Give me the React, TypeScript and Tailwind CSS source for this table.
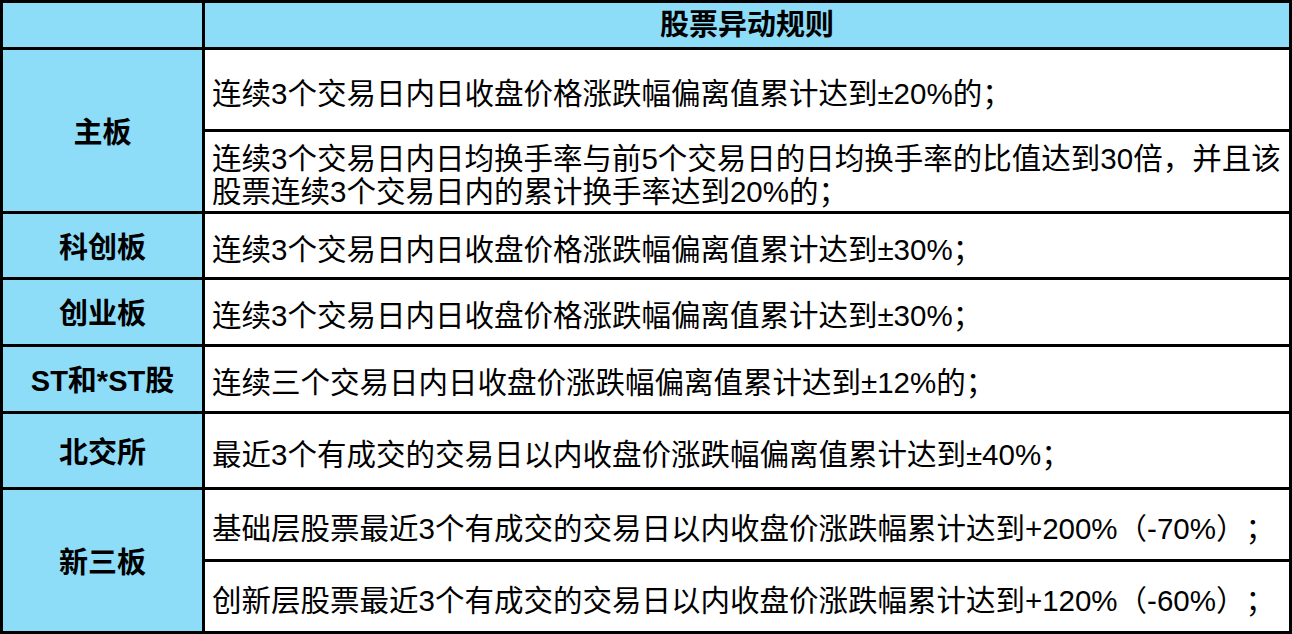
const font = { fontFamily: '"Liberation Sans", "Noto Sans CJK SC", sans-serif' };

function Label({ children, className = "" }: { children: React.ReactNode; className?: string }) {
  return (
    <div className={`flex items-center justify-center bg-[#8ddcf8] pt-[6px] text-[29px] font-bold text-black ${className}`}>
      {children}
    </div>
  );
}

function Rule({ children }: { children: React.ReactNode }) {
  return (
    <div className="flex items-center bg-white pl-[7px] pt-[7px] text-[29.5px] leading-[33px] text-black [text-spacing-trim:space-all]">
      <div>{children}</div>
    </div>
  );
}

export default function App() {
  return (
    <div
      style={font}
      className="grid h-[634px] w-[1292px] grid-cols-[199px_1fr] grid-rows-[44px_79px_79px_63px_64px_64px_73px_69px_69px] gap-[3px] bg-black p-[3px]"
    >
      <div className="bg-[#8ddcf8]" />
      <div className="flex items-center justify-center bg-[#8ddcf8] pt-[2px] text-[29px] font-bold text-black">
        股票异动规则
      </div>

      <Label className="row-span-2">主板</Label>
      <Rule>连续3个交易日内日收盘价格涨跌幅偏离值累计达到±20%的；</Rule>
      <Rule>
        连续3个交易日内日均换手率与前5个交易日的日均换手率的比值达到30倍，并且该
        <br />
        股票连续3个交易日内的累计换手率达到20%的；
      </Rule>

      <Label>科创板</Label>
      <Rule>连续3个交易日内日收盘价格涨跌幅偏离值累计达到±30%；</Rule>

      <Label>创业板</Label>
      <Rule>连续3个交易日内日收盘价格涨跌幅偏离值累计达到±30%；</Rule>

      <Label>ST和*ST股</Label>
      <Rule>连续三个交易日内日收盘价涨跌幅偏离值累计达到±12%的；</Rule>

      <Label>北交所</Label>
      <Rule>最近3个有成交的交易日以内收盘价涨跌幅偏离值累计达到±40%；</Rule>

      <Label className="row-span-2">新三板</Label>
      <Rule>基础层股票最近3个有成交的交易日以内收盘价涨跌幅累计达到+200%（-70%）；</Rule>
      <Rule>创新层股票最近3个有成交的交易日以内收盘价涨跌幅累计达到+120%（-60%）；</Rule>
    </div>
  );
}
